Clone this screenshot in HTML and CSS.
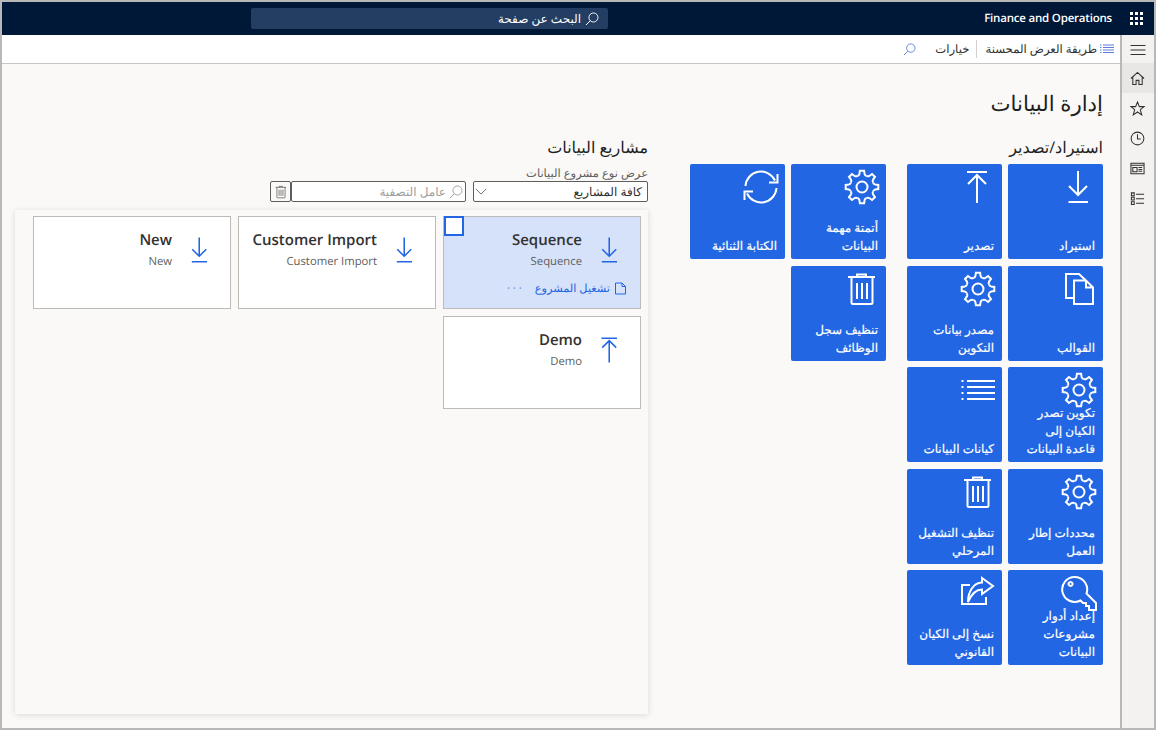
FILE: index.html
```html
<!DOCTYPE html>
<html lang="ar" dir="rtl">
<head>
<meta charset="utf-8">
<title>إدارة البيانات</title>
<link rel="stylesheet" href="styles.css">
</head>
<body>
<svg class="defs" aria-hidden="true">
  <symbol id="i-down" viewBox="0 0 36 36"><path d="M17 2V26M8 17L17 26L26 17M7.5 33H27"/></symbol>
  <symbol id="i-up" viewBox="0 0 36 36"><path d="M7 3H27M17 6V34M8 15L17 6L26 15"/></symbol>
  <symbol id="i-gear" viewBox="0 0 36 36">
    <circle cx="18" cy="18" r="5.5"/>
    <g id="teeth"><path id="tooth" d="M13.41 6.91Q15 6.5 15.4 5L15.9 1.7H20.1L20.6 5Q21 6.5 22.59 6.91"/>
    <use href="#tooth" transform="rotate(45 18 18)"/><use href="#tooth" transform="rotate(90 18 18)"/><use href="#tooth" transform="rotate(135 18 18)"/><use href="#tooth" transform="rotate(180 18 18)"/><use href="#tooth" transform="rotate(225 18 18)"/><use href="#tooth" transform="rotate(270 18 18)"/><use href="#tooth" transform="rotate(315 18 18)"/></g>
  </symbol>
  <symbol id="i-trash" viewBox="0 0 36 36"><path d="M4 6H31M13 6V3.5H22V6M7.5 6V31.5Q7.5 33 9 33H27Q28.5 33 28.5 31.5V6M13 12V28M18 12V28M23 12V28"/></symbol>
  <symbol id="i-sync" viewBox="0 0 36 36"><path d="M2.5 17A15.5 15.5 0 0 1 32 11.5M34.5 5V13.5H26M33.5 19A15.5 15.5 0 0 1 4 24.5M1.5 31V22.5H10"/></symbol>
  <symbol id="i-docs" viewBox="0 0 36 36"><path d="M13 9.5H25L32 16.5V33H13ZM25 9.5V16.5H32M13 27H5V3H18L25 9.5"/></symbol>
  <symbol id="i-list" viewBox="0 0 36 36"><path d="M7 9H35M7 15H35M7 21H35M7 27H35M1.5 9H3.5M1.5 15H3.5M1.5 21H3.5M1.5 27H3.5"/></symbol>
  <symbol id="i-key" viewBox="0 0 36 36"><path d="M25.5 18.5L35 28V35H28V31H25V28H22L19.5 25.5A12.5 12.5 0 1 1 25.5 18.5ZM9.5 7A2 2 0 1 0 9.6 7"/></symbol>
  <symbol id="i-share" viewBox="0 0 36 36"><path d="M10 10H2V29H26V22M22 3L33 11L22 19V14.5C15 14.5 11 20 8 27C8 17 13 8 22 7.5Z"/></symbol>
  <symbol id="i-search" viewBox="0 0 14 14"><path d="M8.5 1A4.5 4.5 0 1 1 8.4 1ZM5.2 8.8L1 13"/></symbol>
</svg>
<div class="frame">
  <header class="topbar">
    <button class="waffle" aria-label="التطبيقات"><i></i><i></i><i></i><i></i><i></i><i></i><i></i><i></i><i></i></button>
    <span class="brand">Finance and Operations</span>
    <div class="searchbox">
      <svg class="ico14"><use href="#i-search"/></svg>
      <span>البحث عن صفحة</span>
    </div>
  </header>
  <div class="shell">
    <nav class="rail">
      <div class="rail-item"><svg viewBox="0 0 16 16"><path d="M0.5 3.5H15.5M0.5 8H15.5M0.5 12.5H15.5"/></svg></div>
      <div class="rail-item rail-item-on rail-tall"><svg viewBox="0 0 16 16"><path d="M1 8L8 1.5L15 8M3 6.5V14.5H6.5V10H9.5V14.5H13V6.5"/></svg></div>
      <div class="rail-item rail-tall"><svg viewBox="0 0 16 16"><path d="M8 1L10 6H15L11 9.3L12.5 14.8L8 11.7L3.5 14.8L5 9.3L1 6H6Z"/></svg></div>
      <div class="rail-item rail-tall"><svg viewBox="0 0 16 16"><circle cx="8" cy="8" r="6.8"/><path d="M8 3.5V8.5H11.5"/></svg></div>
      <div class="rail-item rail-tall"><svg viewBox="0 0 16 16"><path d="M1 2.5H15V13.5H1ZM1 4.5H15M3 7H7.5V11.5H3ZM9 7H13M9 9H13M9 11H13"/></svg></div>
      <div class="rail-item rail-tall"><svg viewBox="0 0 16 16"><path d="M1.5 2H4.5V5H1.5ZM1.5 6.7H4.5V9.7H1.5ZM1.5 11.4H4.5V14.4H1.5ZM6.5 3.5H15M6.5 8.2H15M6.5 13H15"/></svg></div>
    </nav>
    <div class="main">
      <div class="toolbar">
        <svg class="tb-list" viewBox="0 0 14 11"><path d="M3 1H14M3 3.5H14M3 6H14M3 8.5H14M0 1H1.500M0 3.5H1.500M0 6H1.500M0 8.500H1.500"/></svg>
        <span class="tb-text">طريقة العرض المحسنة</span>
        <span class="tb-sep"></span>
        <span class="tb-text">خيارات</span>
        <svg class="ico14 tb-search"><use href="#i-search"/></svg>
      </div>
      <div class="page">
        <h1 class="title">إدارة البيانات</h1>
        <div class="columns">
          <section class="tiles-section">
            <h2 class="heading">استيراد/تصدير</h2>
            <div class="tile-groups">
              <div class="tile-grid">
                <a class="tile"><svg class="tile-ico"><use href="#i-down"/></svg><span class="tile-label">استيراد</span></a>
                <a class="tile"><svg class="tile-ico"><use href="#i-up"/></svg><span class="tile-label">تصدير</span></a>
                <a class="tile"><svg class="tile-ico"><use href="#i-docs"/></svg><span class="tile-label">القوالب</span></a>
                <a class="tile"><svg class="tile-ico"><use href="#i-gear"/></svg><span class="tile-label">مصدر بيانات التكوين</span></a>
                <a class="tile"><svg class="tile-ico"><use href="#i-gear"/></svg><span class="tile-label">تكوين تصدر الكيان إلى قاعدة البيانات</span></a>
                <a class="tile"><svg class="tile-ico"><use href="#i-list"/></svg><span class="tile-label">كيانات البيانات</span></a>
                <a class="tile"><svg class="tile-ico"><use href="#i-gear"/></svg><span class="tile-label">محددات إطار العمل</span></a>
                <a class="tile"><svg class="tile-ico"><use href="#i-trash"/></svg><span class="tile-label">تنظيف التشغيل المرحلي</span></a>
                <a class="tile"><svg class="tile-ico"><use href="#i-key"/></svg><span class="tile-label">إعداد أدوار مشروعات البيانات</span></a>
                <a class="tile"><svg class="tile-ico"><use href="#i-share"/></svg><span class="tile-label">نسخ إلى الكيان القانوني</span></a>
              </div>
              <div class="tile-grid">
                <a class="tile"><svg class="tile-ico"><use href="#i-gear"/></svg><span class="tile-label">أتمتة مهمة البيانات</span></a>
                <a class="tile"><svg class="tile-ico"><use href="#i-sync"/></svg><span class="tile-label">الكتابة الثنائية</span></a>
                <a class="tile"><svg class="tile-ico"><use href="#i-trash"/></svg><span class="tile-label">تنظيف سجل الوظائف</span></a>
              </div>
            </div>
          </section>
          <section class="projects">
            <h2 class="heading">مشاريع البيانات</h2>
            <div class="field-label">عرض نوع مشروع البيانات</div>
            <div class="controls">
              <div class="control select">
                <span>كافة المشاريع</span>
                <svg class="chev" viewBox="0 0 14 8"><path d="M1 1L7 7L13 1"/></svg>
              </div>
              <div class="control filter">
                <svg class="ico14"><use href="#i-search"/></svg>
                <span>عامل التصفية</span>
              </div>
              <button class="trash-btn" aria-label="حذف"><svg><use href="#i-trash"/></svg></button>
            </div>
            <div class="panel">
              <article class="card card-on">
                <span class="check"></span>
                <svg class="card-ico"><use href="#i-down"/></svg>
                <div class="card-body">
                  <div class="card-title">Sequence</div>
                  <div class="card-sub">Sequence</div>
                </div>
                <div class="card-actions">
                  <svg class="doc" viewBox="0 0 13 13"><path d="M1.500 12V1H8L11.500 4.500V12H1.500ZM8 1V4.500H11.500"/></svg>
                  <span>تشغيل المشروع</span>
                  <span class="more">···</span>
                </div>
              </article>
              <article class="card">
                <svg class="card-ico"><use href="#i-down"/></svg>
                <div class="card-body">
                  <div class="card-title">Customer Import</div>
                  <div class="card-sub">Customer Import</div>
                </div>
              </article>
              <article class="card">
                <svg class="card-ico"><use href="#i-down"/></svg>
                <div class="card-body">
                  <div class="card-title">New</div>
                  <div class="card-sub">New</div>
                </div>
              </article>
              <article class="card">
                <svg class="card-ico"><use href="#i-up"/></svg>
                <div class="card-body">
                  <div class="card-title">Demo</div>
                  <div class="card-sub">Demo</div>
                </div>
              </article>
            </div>
          </section>
        </div>
      </div>
    </div>
  </div>
</div>
</body>
</html>
```
FILE: styles.css
```css
* { box-sizing: border-box; }
html, body { margin: 0; padding: 0; }
body { font-family: "Open Sans", "Noto Sans", sans-serif; font-size: 12px; color: #323130; background: #faf9f8; text-rendering: geometricPrecision; }
.defs { position: absolute; width: 0; height: 0; }
symbol path, symbol circle { fill: none; stroke: currentColor; stroke-width: 2; }
#i-search path { stroke-width: 1; }
.frame { width: 1156px; height: 730px; border: 2px solid #b8b8b8; display: flex; flex-direction: column; overflow: hidden; }

.topbar { height: 33px; flex: none; background: #001838; color: #fff; display: flex; align-items: center; }
.waffle { width: 34px; height: 33px; padding: 10px 10px; border: 0; background: none; display: grid; grid-template-columns: repeat(3, 3px); grid-auto-rows: 3px; gap: 2px; direction: ltr; }
.waffle i { background: #fff; display: block; }
.brand { direction: ltr; font-size: 11.5px; letter-spacing: -0.2px; font-weight: 600; margin-right: 8px; white-space: nowrap; width: 129px; text-align: right; }
.searchbox { width: 357px; height: 21px; margin-right: 375px; background: #243d63; border-radius: 2px; display: flex; align-items: center; gap: 4px; padding-right: 9px; color: #fff; font-size: 12px; }
.ico14 { width: 14px; height: 14px; flex: none; }
.searchbox .ico14 { color: #fff; }

.shell { flex: 1; display: flex; min-height: 0; }
.rail { width: 34px; flex: none; background: #f3f2f1; border-left: 2px solid #b8b8b8; display: flex; flex-direction: column; }
.rail-item { height: 28px; display: flex; align-items: center; justify-content: center; padding-top: 2px; color: #323130; }
.rail-tall { height: 30px; padding: 0 2px 0 0; }
.rail-item-on { background: #e9e7e5; }
.rail-item svg { width: 16px; height: 16px; fill: none; stroke: currentColor; stroke-width: 1.100; }
.rail-tall svg { width: 15px; height: 15px; }

.main { flex: 1; min-width: 0; display: flex; flex-direction: column; }
.toolbar { height: 29px; flex: none; background: #fff; border-bottom: 1px solid #c8c6c4; display: flex; align-items: center; padding-right: 6px; gap: 3px; font-size: 11.7px; }
.tb-list { width: 14px; height: 11px; fill: none; stroke: #5d7fd8; stroke-width: 1; }
.tb-text { white-space: nowrap; color: #323130; }
.tb-sep { width: 1px; height: 18px; background: #d2d0ce; margin: 0 5px 0 4px; }
.tb-search { color: #5d82dc; margin-right: 16px; width: 13px; height: 13px; }

.page { flex: 1; padding: 26px 17px 0 0; min-height: 0; }
.title { margin: 0; font-size: 21.3px; font-weight: 400; line-height: 28px; height: 28px; color: #201f1e; }
.columns { display: flex; gap: 42px; margin-top: 19px; }
.heading { margin: 0; font-size: 16px; font-weight: 400; line-height: 20px; height: 20px; color: #201f1e; }

.tiles-section { width: 413px; flex: none; }
.tile-groups { display: flex; gap: 21px; margin-top: 7px; align-items: flex-start; }
.tile-grid { display: grid; grid-template-columns: 95px 95px; grid-auto-rows: 95px; column-gap: 6px; row-gap: 6.5px; }
.tile { background: #2266e3; color: #fff; border-radius: 2px; display: flex; flex-direction: column; overflow: hidden; padding: 5px 6px 4px 7px; }
.tile-ico { width: 36px; height: 36px; flex: none; margin-bottom: -5px; color: #fff; }
.tile-label { margin-top: auto; padding-right: 2px; font-size: 12px; font-weight: 500; line-height: 18px; -webkit-text-stroke: 0.2px #fff; }

.projects { width: 633px; flex: none; }
.field-label { margin-top: 9px; height: 15px; line-height: 15px; font-size: 11.5px; color: #605e5c; }
.controls { display: flex; height: 21px; }
.control { height: 21px; width: 175px; background: #fff; border: 1px solid #605e5c; border-radius: 2px; display: flex; align-items: center; font-size: 12px; }
.select { justify-content: space-between; padding: 0 5px 0 1px; }
.chev { width: 12px; height: 7px; fill: none; stroke: #605e5c; stroke-width: 1; }
.filter { margin-right: 7px; padding-right: 2px; gap: 3px; color: #a19f9d; }
.trash-btn { width: 21px; height: 21px; padding: 0; background: transparent; border: 1px solid #605e5c; border-radius: 2px; display: flex; align-items: center; justify-content: center; color: #605e5c; }
.trash-btn svg { width: 14px; height: 14px; }
.panel { margin-top: 8px; height: 504px; padding: 6px 7px; background: #faf9f8; box-shadow: 0 1px 6px rgba(0, 0, 0, 0.13); display: grid; grid-template-columns: repeat(3, 198px); grid-auto-rows: 93px; gap: 7px; align-content: start; }
.card { position: relative; background: #fff; border: 1px solid #bdbbb8; padding: 13px 16px 0 0; display: flex; align-items: flex-start; gap: 14px; }
.card-on { background: #d5e2fa; }
.check { position: absolute; left: 0; top: -1px; width: 20px; height: 20px; background: #fff; border: 2px solid #2266e3; }
.card-ico { width: 28px; height: 28px; flex: none; margin-top: 6px; color: #2266e3; }
.card-body { display: flex; flex-direction: column; }
.card-title { direction: ltr; text-align: right; font-size: 15px; font-weight: 550; line-height: 20px; color: #323130; white-space: nowrap; }
.card-sub { direction: ltr; text-align: right; font-size: 11.3px; line-height: 16px; margin-top: 4px; color: #605e5c; white-space: nowrap; }
.card-actions { position: absolute; right: 13px; top: 64px; display: flex; align-items: center; gap: 4px; font-size: 11.3px; color: #2266e3; white-space: nowrap; }
.doc { width: 13px; height: 13px; fill: none; stroke: #2266e3; stroke-width: 1; }
.more { margin-right: 6px; letter-spacing: 3px; color: #5d82dc; }
```
